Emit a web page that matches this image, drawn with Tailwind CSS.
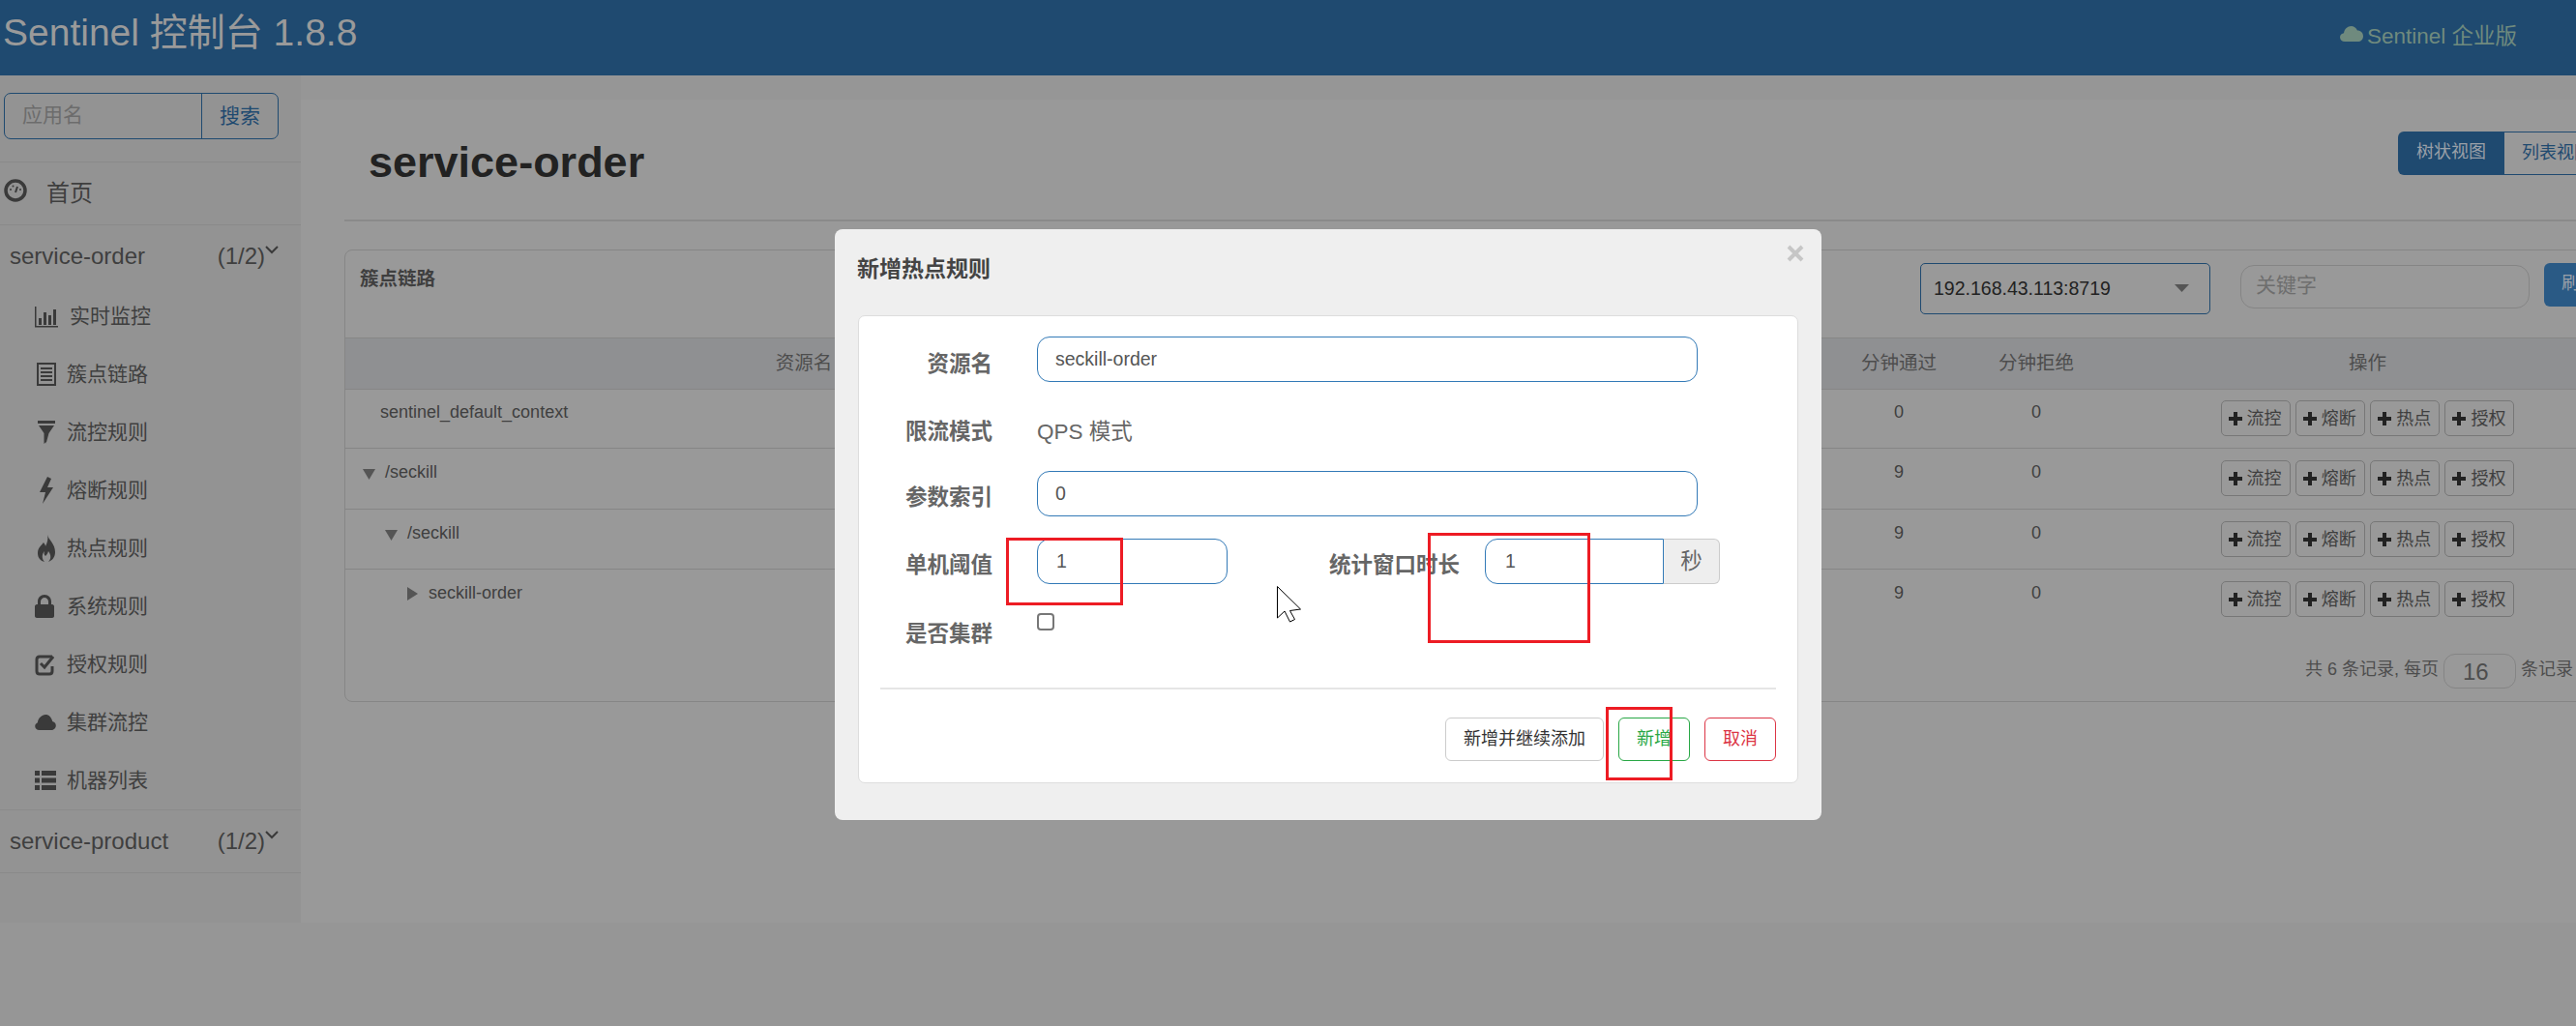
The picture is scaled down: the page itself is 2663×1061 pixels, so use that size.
<!doctype html>
<html><head><meta charset="utf-8"><script src="https://cdn.jsdelivr.net/npm/@tailwindcss/browser@4"></script></head>
<body class="m-0 overflow-hidden bg-[#969696]">
<div class="relative w-[2663px] h-[1061px] overflow-hidden font-['Liberation_Sans','Noto_Sans_CJK_SC',sans-serif] text-[#3f3f3f]">
  <header class="h-[78px] bg-[#1f4a70] flex justify-between pl-[3px] text-[#9a9a9a]">
    <div class="text-[39px] leading-[67px]">Sentinel 控制台 1.8.8</div>
    <div class="flex items-start pt-[25px] pr-[61px] text-[#6f8a7e] text-[22.5px] leading-[26px] gap-[4px]">
      <svg class="w-[24px] h-[20px] mt-[1px]" viewBox="0 0 24 20" fill="currentColor"><path d="M5 17c-3 0-5-2-5-4.500s2-4 4-4.300C4.500 4 8 1 11.500 1c3 0 5 1.500 6.500 4.500 3.500 0 6 2.500 6 6s-2.500 5.500-5.500 5.500z"/></svg>
      <span>Sentinel 企业版</span>
    </div>
  </header>
  <div class="flex h-[983px]">
    <aside class="w-[311px] h-[876px] shrink-0 bg-[#939393] pt-[18px]">
      <div class="ml-[4px] w-[284px] h-[48px] flex rounded-[7px] border border-[#1f4a70] text-[21px]">
        <div class="w-[204px] border-r border-[#1f4a70] pl-[18px] leading-[44px] text-[#6c6c6c]">应用名</div>
        <div class="flex-1 text-center leading-[46px] text-[#1f4a70]">搜索</div>
      </div>
      <div class="mt-[23px] h-[66px] border-y border-[#8a8a8a] flex items-center pl-[4px] gap-[20px] text-[24px]">
        <svg class="w-[24px] h-[24px] -mt-[6px]" viewBox="0 0 24 24"><circle cx="12" cy="12" r="10" fill="none" stroke="#3a3a3a" stroke-width="3.500"/><path d="M12 14l2-6" stroke="#3a3a3a" stroke-width="2"/><circle cx="7" cy="11" r="1" fill="#3a3a3a"/><circle cx="17" cy="11" r="1" fill="#3a3a3a"/><circle cx="9.500" cy="7.500" r="1" fill="#3a3a3a"/></svg>
        <span>首页</span>
      </div>
      <div class="h-[65px] flex items-center justify-between pl-[10px] text-[24px] -mt-px">
        <span>service-order</span>
        <div class="flex items-start mr-[23px]"><span>(1/2)</span><svg class="w-[14px] h-[9px] mt-[7px]" viewBox="0 0 14 9" fill="none" stroke="#3a3a3a" stroke-width="2"><path d="M1 1l6 6 6-6"/></svg></div>
      </div>
      <nav class="text-[21px]">
        <div class="h-[60px] flex items-center pl-[36px] gap-[12px]"><svg class="w-[24px] h-[24px]" viewBox="0 0 24 24" fill="#3a3a3a"><path d="M0 2h1.500v20H24v1.500H0z"/><path d="M4 14h3v7H4zM9 8h3v13H9zM14 11h3v10h-3zM19 5h3v16h-3z"/></svg><span>实时监控</span></div>
        <div class="h-[60px] flex items-center pl-[38px] gap-[11px]"><svg class="w-[20px] h-[24px]" viewBox="0 0 20 24"><rect x="1" y="1" width="18" height="22" fill="none" stroke="#3a3a3a" stroke-width="2"/><path d="M4 6h12M4 10h12M4 14h12M4 18h12" stroke="#3a3a3a" stroke-width="2"/></svg><span>簇点链路</span></div>
        <div class="h-[60px] flex items-center pl-[38px] gap-[11px]"><svg class="w-[20px] h-[24px]" viewBox="0 0 20 24" fill="#3a3a3a"><path d="M1 0h18v3H1zM2 5h16l-5.500 8-3 11v-2l-2 2V13z"/></svg><span>流控规则</span></div>
        <div class="h-[60px] flex items-center pl-[40px] gap-[13px]"><svg class="w-[16px] h-[28px]" viewBox="0 0 16 28" fill="#3a3a3a"><path d="M9 0L1 16h6l-3 12 11-17H9l4-9z"/></svg><span>熔断规则</span></div>
        <div class="h-[60px] flex items-center pl-[38px] gap-[11px]"><svg class="w-[20px] h-[28px]" viewBox="0 0 20 28" fill="#3a3a3a"><path d="M11 0c1 5 8 9 8 18 0 6-4 9-7 10 3-3 3-7 0-11-1 3-2 4-3 5-1-1-2-2-1-5-3 3-3 8 0 11-4-1-7-4-7-9 0-6 4-8 6-11 1 1 2 3 2 4 2-4 3-8 2-12z"/></svg><span>热点规则</span></div>
        <div class="h-[60px] flex items-center pl-[36px] gap-[13px]"><svg class="w-[20px] h-[24px]" viewBox="0 0 20 24" fill="#3a3a3a"><path d="M2 10h1V7c0-4 3-7 7-7s7 3 7 7v3h1c1 0 2 1 2 2v10c0 1-1 2-2 2H2c-1 0-2-1-2-2V12c0-1 1-2 2-2zm4 0h8V7c0-2-2-4-4-4S6 5 6 7z"/></svg><span>系统规则</span></div>
        <div class="h-[60px] flex items-center pl-[36px] gap-[13px]"><svg class="w-[20px] h-[24px]" viewBox="0 0 20 24"><path d="M18 4H5C3 4 2 5 2 7v12c0 2 1 3 3 3h10c2 0 3-1 3-3v-5" fill="none" stroke="#3a3a3a" stroke-width="3"/><path d="M6 11l4 4 9-11" fill="none" stroke="#3a3a3a" stroke-width="3"/></svg><span>授权规则</span></div>
        <div class="h-[60px] flex items-center pl-[36px] gap-[11px]"><svg class="w-[22px] h-[18px]" viewBox="0 0 24 20" fill="#3a3a3a"><path d="M5 19c-3 0-5-2-5-4.500s2-4 3-4.300C3.500 5 8 1 12 1c4 0 7 3 8 8 3 .5 4 3 4 5s-2 5-5 5z"/></svg><span>集群流控</span></div>
        <div class="h-[60px] flex items-center pl-[36px] gap-[11px]"><svg class="w-[22px] h-[20px]" viewBox="0 0 22 20" fill="#3a3a3a"><path d="M0 0h5v5H0zM7 0h15v5H7zM0 7.500h5v5H0zM7 7.500h15v5H7zM0 15h5v5H0zM7 15h15v5H7z"/></svg><span>机器列表</span></div>
      </nav>
      <div class="h-[66px] border-y border-[#8a8a8a] flex items-center justify-between pl-[10px] text-[24px]">
        <span>service-product</span>
        <div class="flex items-start mr-[23px]"><span>(1/2)</span><svg class="w-[14px] h-[9px] mt-[7px]" viewBox="0 0 14 9" fill="none" stroke="#3a3a3a" stroke-width="2"><path d="M1 1l6 6 6-6"/></svg></div>
      </div>
    </aside>
    <main class="flex-1 min-w-0 overflow-hidden mt-[25px] h-[851px] bg-[#999999] pl-[45px]">
      <div class="h-[126px] border-b-2 border-[#8a8a8a] flex justify-between items-start">
        <h1 class="m-0 mt-[38px] ml-[25px] text-[45px] leading-[54px] font-bold text-[#222222]">service-order</h1>
        <div class="flex mt-[33px] text-[18px] leading-[43px] whitespace-nowrap -mr-[56px] shrink-0">
          <div class="w-[110px] h-[45px] bg-[#1f4a70] rounded-l-[6px] text-center text-[#9aa0a8]">树状视图</div>
          <div class="w-[130px] h-[45px] border border-l-0 border-[#1f4a70] pl-[18px] text-[#1f4a70]">列表视图</div>
        </div>
      </div>
      <section class="mt-[29px] w-[2364px] h-[468px] border border-[#868686] rounded-[8px]">
        <div class="h-[90px] flex items-start pl-[15px]">
          <div class="mt-[15px] text-[19.5px] leading-[28px] font-bold text-[#3f3f3f]">簇点链路</div>
          <div class="ml-auto mr-[8px] mt-[13px] flex items-start gap-[31px]">
            <div class="w-[300px] h-[53px] border border-[#1f4a70] rounded-[5px] pl-[13px] pr-[21px] flex items-center justify-between text-[19.5px] text-[#222222]"><span>192.168.43.113:8719</span><svg class="w-[15px] h-[8px] -mt-[2px]" viewBox="0 0 15 8" fill="#555555"><path d="M0 0h15L7.500 8z"/></svg></div>
            <div class="flex gap-[15px] mt-[2px]">
              <div class="w-[299px] h-[45px] border border-[#858585] rounded-[14px] pl-[15px] text-[21px] leading-[40px] text-[#6e6e6e]">关键字</div>
              <div class="w-[81px] h-[45px] -mt-[2px] bg-[#2a5a85] rounded-l-[6px] pl-[18px] text-[18px] leading-[43px] text-[#9aa0a8] whitespace-nowrap">刷新</div>
            </div>
          </div>
        </div>
        <div class="h-[54px] border-y border-[#868686] bg-[#8f9092] flex items-center text-[19.5px] text-[#4d4d4d]">
          <span class="w-[948px] text-center">资源名</span>
          <span class="w-[587px]"></span>
          <span class="w-[142px] text-center">分钟通过</span>
          <span class="w-[142px] text-center">分钟拒绝</span>
          <span class="w-[543px] text-center">操作</span>
        </div>

        <div class="h-[61px] border-b border-[#868686] flex items-start text-[18px] leading-[26px]">
          <div class="w-[1535px] pl-[36px] pt-[10px]">sentinel_default_context</div>
          <div class="w-[142px] text-center pt-[10px]">0</div>
          <div class="w-[142px] text-center pt-[10px]">0</div>
          <div class="w-[543px] pt-[11px] flex justify-center gap-[5.33px]">
            <div class="w-[72px] h-[37px] border border-[#777777] rounded-[5px] flex items-center pl-[7px] gap-[5px]"><svg class="w-[14px] h-[14px] shrink-0" viewBox="0 0 14 14" fill="#222222"><path d="M5 0h4v5h5v4H9v5H5V9H0V5h5z"/></svg><span>流控</span></div>
            <div class="w-[72px] h-[37px] border border-[#777777] rounded-[5px] flex items-center pl-[7px] gap-[5px]"><svg class="w-[14px] h-[14px] shrink-0" viewBox="0 0 14 14" fill="#222222"><path d="M5 0h4v5h5v4H9v5H5V9H0V5h5z"/></svg><span>熔断</span></div>
            <div class="w-[72px] h-[37px] border border-[#777777] rounded-[5px] flex items-center pl-[7px] gap-[5px]"><svg class="w-[14px] h-[14px] shrink-0" viewBox="0 0 14 14" fill="#222222"><path d="M5 0h4v5h5v4H9v5H5V9H0V5h5z"/></svg><span>热点</span></div>
            <div class="w-[72px] h-[37px] border border-[#777777] rounded-[5px] flex items-center pl-[7px] gap-[5px]"><svg class="w-[14px] h-[14px] shrink-0" viewBox="0 0 14 14" fill="#222222"><path d="M5 0h4v5h5v4H9v5H5V9H0V5h5z"/></svg><span>授权</span></div>
          </div>
        </div>

        <div class="h-[63px] border-b border-[#868686] flex items-start text-[18px] leading-[26px]">
          <div class="w-[1535px] pl-[18px] pt-[11px] flex items-center gap-[10px]"><svg class="w-[13px] h-[11px] mt-[4px]" viewBox="0 0 13 11" fill="#555555"><path d="M0 0h13L6.500 11z"/></svg><span>/seckill</span></div>
          <div class="w-[142px] text-center pt-[11px]">9</div>
          <div class="w-[142px] text-center pt-[11px]">0</div>
          <div class="w-[543px] pt-[12px] flex justify-center gap-[5.33px]">
            <div class="w-[72px] h-[37px] border border-[#777777] rounded-[5px] flex items-center pl-[7px] gap-[5px]"><svg class="w-[14px] h-[14px] shrink-0" viewBox="0 0 14 14" fill="#222222"><path d="M5 0h4v5h5v4H9v5H5V9H0V5h5z"/></svg><span>流控</span></div>
            <div class="w-[72px] h-[37px] border border-[#777777] rounded-[5px] flex items-center pl-[7px] gap-[5px]"><svg class="w-[14px] h-[14px] shrink-0" viewBox="0 0 14 14" fill="#222222"><path d="M5 0h4v5h5v4H9v5H5V9H0V5h5z"/></svg><span>熔断</span></div>
            <div class="w-[72px] h-[37px] border border-[#777777] rounded-[5px] flex items-center pl-[7px] gap-[5px]"><svg class="w-[14px] h-[14px] shrink-0" viewBox="0 0 14 14" fill="#222222"><path d="M5 0h4v5h5v4H9v5H5V9H0V5h5z"/></svg><span>热点</span></div>
            <div class="w-[72px] h-[37px] border border-[#777777] rounded-[5px] flex items-center pl-[7px] gap-[5px]"><svg class="w-[14px] h-[14px] shrink-0" viewBox="0 0 14 14" fill="#222222"><path d="M5 0h4v5h5v4H9v5H5V9H0V5h5z"/></svg><span>授权</span></div>
          </div>
        </div>

        <div class="h-[62px] border-b border-[#868686] flex items-start text-[18px] leading-[26px]">
          <div class="w-[1535px] pl-[41px] pt-[11px] flex items-center gap-[10px]"><svg class="w-[13px] h-[11px] mt-[4px]" viewBox="0 0 13 11" fill="#555555"><path d="M0 0h13L6.500 11z"/></svg><span>/seckill</span></div>
          <div class="w-[142px] text-center pt-[11px]">9</div>
          <div class="w-[142px] text-center pt-[11px]">0</div>
          <div class="w-[543px] pt-[12px] flex justify-center gap-[5.33px]">
            <div class="w-[72px] h-[37px] border border-[#777777] rounded-[5px] flex items-center pl-[7px] gap-[5px]"><svg class="w-[14px] h-[14px] shrink-0" viewBox="0 0 14 14" fill="#222222"><path d="M5 0h4v5h5v4H9v5H5V9H0V5h5z"/></svg><span>流控</span></div>
            <div class="w-[72px] h-[37px] border border-[#777777] rounded-[5px] flex items-center pl-[7px] gap-[5px]"><svg class="w-[14px] h-[14px] shrink-0" viewBox="0 0 14 14" fill="#222222"><path d="M5 0h4v5h5v4H9v5H5V9H0V5h5z"/></svg><span>熔断</span></div>
            <div class="w-[72px] h-[37px] border border-[#777777] rounded-[5px] flex items-center pl-[7px] gap-[5px]"><svg class="w-[14px] h-[14px] shrink-0" viewBox="0 0 14 14" fill="#222222"><path d="M5 0h4v5h5v4H9v5H5V9H0V5h5z"/></svg><span>热点</span></div>
            <div class="w-[72px] h-[37px] border border-[#777777] rounded-[5px] flex items-center pl-[7px] gap-[5px]"><svg class="w-[14px] h-[14px] shrink-0" viewBox="0 0 14 14" fill="#222222"><path d="M5 0h4v5h5v4H9v5H5V9H0V5h5z"/></svg><span>授权</span></div>
          </div>
        </div>

        <div class="h-[62px] flex items-start text-[18px] leading-[26px]">
          <div class="w-[1535px] pl-[64px] pt-[11px] flex items-center gap-[11px]"><svg class="w-[11px] h-[14px] mt-[2px]" viewBox="0 0 11 14" fill="#555555"><path d="M0 0l11 7L0 14z"/></svg><span>seckill-order</span></div>
          <div class="w-[142px] text-center pt-[11px]">9</div>
          <div class="w-[142px] text-center pt-[11px]">0</div>
          <div class="w-[543px] pt-[12px] flex justify-center gap-[5.33px]">
            <div class="w-[72px] h-[37px] border border-[#777777] rounded-[5px] flex items-center pl-[7px] gap-[5px]"><svg class="w-[14px] h-[14px] shrink-0" viewBox="0 0 14 14" fill="#222222"><path d="M5 0h4v5h5v4H9v5H5V9H0V5h5z"/></svg><span>流控</span></div>
            <div class="w-[72px] h-[37px] border border-[#777777] rounded-[5px] flex items-center pl-[7px] gap-[5px]"><svg class="w-[14px] h-[14px] shrink-0" viewBox="0 0 14 14" fill="#222222"><path d="M5 0h4v5h5v4H9v5H5V9H0V5h5z"/></svg><span>熔断</span></div>
            <div class="w-[72px] h-[37px] border border-[#777777] rounded-[5px] flex items-center pl-[7px] gap-[5px]"><svg class="w-[14px] h-[14px] shrink-0" viewBox="0 0 14 14" fill="#222222"><path d="M5 0h4v5h5v4H9v5H5V9H0V5h5z"/></svg><span>热点</span></div>
            <div class="w-[72px] h-[37px] border border-[#777777] rounded-[5px] flex items-center pl-[7px] gap-[5px]"><svg class="w-[14px] h-[14px] shrink-0" viewBox="0 0 14 14" fill="#222222"><path d="M5 0h4v5h5v4H9v5H5V9H0V5h5z"/></svg><span>授权</span></div>
          </div>
        </div>

        <div class="mt-[25px] mr-[59px] flex justify-end items-start gap-[5px] text-[18px] text-[#4d4d4d]">
          <span class="leading-[32px]">共 6 条记录, 每页</span>
          <div class="w-[75px] h-[36px] border border-[#858585] rounded-[12px] pl-[19px] text-[24px] leading-[36px]">16</div>
          <span class="leading-[32px]">条记录</span>
        </div>
      </section>
    </main>
  </div>

  <!-- modal overlay -->
  <div class="absolute left-[863px] top-[237px] w-[1020px] h-[611px] bg-[#efefef] rounded-[8px] pt-[26px]">
    <div class="pl-[23px] text-[23px] leading-[30px] font-bold text-[#444444]">新增热点规则</div>
    <svg class="absolute right-[18px] top-[16px] w-[18px] h-[18px]" viewBox="0 0 18 18" stroke="#c6c6c6" stroke-width="4"><path d="M2 2l14 14M16 2L2 16"/></svg>
    <div class="mt-[33px] ml-[24px] w-[972px] h-[484px] bg-white border border-[#dddddd] rounded-[7px] pt-[21px] px-[22px] text-[22.5px] leading-[30px] text-[#666666]">
      <div class="h-[69px] flex items-start gap-[46px]">
        <div class="w-[116px] text-right font-bold mt-[14px]">资源名</div>
        <div class="w-[683px] h-[47px] border border-[#337ab7] rounded-[13px] pl-[18px] text-[19.5px] leading-[45px] text-[#555555]">seckill-order</div>
      </div>
      <div class="h-[70px] flex items-start gap-[46px]">
        <div class="w-[116px] text-right font-bold mt-[15px]">限流模式</div>
        <div class="mt-[15px]">QPS 模式</div>
      </div>
      <div class="h-[70px] flex items-start gap-[46px]">
        <div class="w-[116px] text-right font-bold mt-[13px]">参数索引</div>
        <div class="w-[683px] h-[47px] border border-[#337ab7] rounded-[13px] pl-[18px] text-[19.5px] leading-[45px] text-[#555555]">0</div>
      </div>
      <div class="h-[70px] flex items-start">
        <div class="w-[116px] text-right font-bold mt-[13px]">单机阈值</div>
        <div class="ml-[46px] w-[197px] h-[47px] border border-[#337ab7] rounded-[13px] pl-[19px] text-[19.5px] leading-[45px] text-[#555555]">1</div>
        <div class="ml-[105px] w-[138px] font-bold mt-[13px] whitespace-nowrap">统计窗口时长</div>
        <div class="ml-[23px] w-[185px] h-[47px] border border-[#337ab7] rounded-l-[13px] pl-[20px] text-[19.5px] leading-[45px] text-[#555555]">1</div>
        <div class="w-[58px] h-[47px] bg-[#eeeeee] border border-l-0 border-[#cccccc] rounded-r-[6px] text-center text-[22.5px] leading-[45px]">秒</div>
      </div>
      <div class="h-[84px] flex items-start gap-[46px]">
        <div class="w-[116px] text-right font-bold mt-[14px]">是否集群</div>
        <div class="mt-[7px] w-[18px] h-[18px] border-2 border-[#777777] rounded-[4px] bg-white"></div>
      </div>
      <div class="h-[2px] bg-[#e5e5e5]"></div>
      <div class="mt-[29px] flex justify-end gap-[15px] text-[18px] leading-[43px] text-center">
        <div class="w-[164px] h-[45px] border border-[#cccccc] rounded-[6px] text-[#333333]">新增并继续添加</div>
        <div class="w-[74px] h-[45px] border border-[#28a745] rounded-[6px] text-[#28a745]">新增</div>
        <div class="w-[74px] h-[45px] border border-[#dc3545] rounded-[6px] text-[#dc3545]">取消</div>
      </div>
    </div>
  </div>

  <!-- annotations drawn over the screenshot -->
  <div class="absolute left-[1040px] top-[556px] w-[121px] h-[70px] border-[3px] border-[#ed1c24]"></div>
  <div class="absolute left-[1476px] top-[551px] w-[168px] h-[114px] border-[3px] border-[#ed1c24]"></div>
  <div class="absolute left-[1660px] top-[731px] w-[69px] h-[76px] border-[3px] border-[#ed1c24]"></div>
  <svg class="absolute left-[1320px] top-[606px] w-[26px] h-[39px]" viewBox="0 0 26 39" fill="white" stroke="black" stroke-width="1"><path d="M.5.5L24.500 24 13.500 25.500 18.500 34.500 13.500 37 8 26 .5 33z"/></svg>
</div>
</body></html>
